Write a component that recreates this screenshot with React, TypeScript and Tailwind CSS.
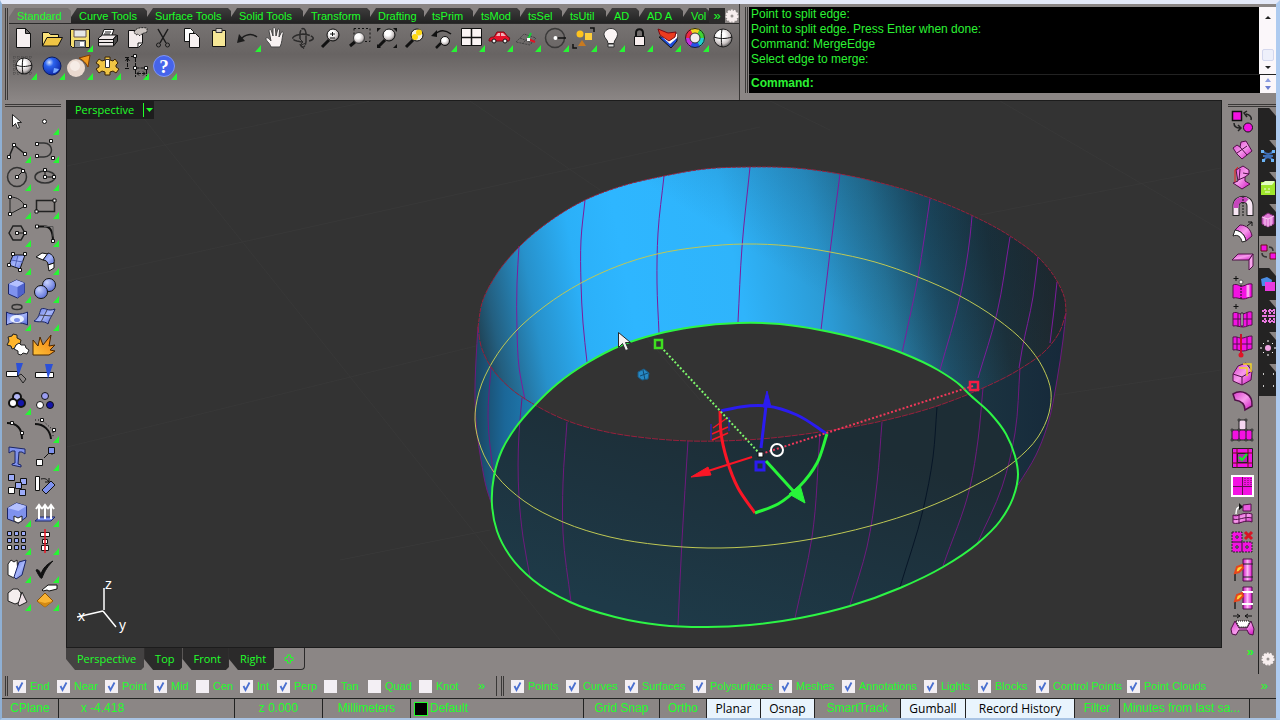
import React, { useState } from "react";

type Point = [number, number];

const dist = (a: Point, b: Point) => Math.hypot(a[0] - b[0], a[1] - b[1]);

// Turns a list of points into a smooth path, tangents weighted by chord length
const curve = (pts: Point[], closed = false) => {
  const n = pts.length;
  const at = (i: number) => (closed ? pts[(i + n) % n] : pts[Math.max(0, Math.min(n - 1, i))]);
  const tangent = (i: number): Point => {
    const [a, b, c] = [at(i - 1), at(i), at(i + 1)];
    const d0 = dist(a, b);
    const d1 = dist(b, c);
    if (!d0) return [(c[0] - b[0]) / d1, (c[1] - b[1]) / d1];
    if (!d1) return [(b[0] - a[0]) / d0, (b[1] - a[1]) / d0];
    const along = (k: 0 | 1) => (((b[k] - a[k]) / d0) * d1 + ((c[k] - b[k]) / d1) * d0) / (d0 + d1);
    return [along(0), along(1)];
  };
  let d = `M${pts[0][0]} ${pts[0][1]}`;
  for (let i = 0; i < (closed ? n : n - 1); i++) {
    const [b, c, tb, tc] = [at(i), at(i + 1), tangent(i), tangent(i + 1)];
    const s = dist(b, c) / 3;
    d += `C${b[0] + tb[0] * s} ${b[1] + tb[1] * s} ${c[0] - tc[0] * s} ${c[1] - tc[1] * s} ${c[0]} ${c[1]}`;
  }
  return d;
};

// Joins a curve onto a path that is already open
const join = (pts: Point[]) => curve(pts).replace("M", "L");

// ---------- Ring geometry ----------
const rimBack: Point[] = [[478, 327], [482, 303], [496, 275], [520, 246], [550, 221], [585, 200], [622, 186], [664, 176], [705, 169], [750, 167], [795, 168], [840, 174], [885, 184], [930, 198], [971, 215], [1010, 236], [1038, 257], [1057, 281], [1065, 300], [1066, 313]];
const rimFrontLeft: Point[] = [[478, 327], [481, 346], [491, 367], [510, 388], [535, 405]];
const rimFrontMid: Point[] = [[535, 405], [568, 421], [607, 432], [647, 438], [690, 441], [720, 441], [760, 439], [820, 432], [882, 421], [937, 406], [969, 394]];
const rimFrontRight: Point[] = [[969, 394], [983, 388], [1020, 369], [1047, 349], [1060, 331], [1066, 313]];
const baseTop: Point[] = [[535, 405], [557, 384], [587, 363], [622, 345], [657, 334], [693, 327], [738, 323], [780, 324], [820, 330], [863, 340], [902, 353], [938, 370], [960, 385], [969, 394]];
const baseRight: Point[] = [[969, 394], [990, 413], [1006, 434], [1015, 456], [1018, 474]];
const baseBottom: Point[] = [[1018, 474], [1013, 498], [1000, 521], [977, 544], [943, 567], [900, 588], [850, 606], [800, 618], [750, 625], [707, 627], [660, 625], [615, 617], [570, 602], [533, 580], [510, 556], [497, 531], [492, 505]];
const baseLeft: Point[] = [[492, 505], [494, 476], [502, 450], [516, 427], [535, 405]];
const sideLeft: Point[] = [[478, 327], [476, 360], [475, 400], [477, 433], [481, 460], [487, 490], [492, 505]];
const sideRight: Point[] = [[1066, 313], [1063, 340], [1057, 380], [1047, 427], [1036, 455], [1018, 485]];
const middle: Point[] = [[745, 244], [790, 246], [830, 252], [875, 262], [918, 277], [960, 296], [997, 319], [1026, 344], [1043, 368], [1051, 392], [1049, 413], [1038, 437], [1015, 461], [970, 488], [923, 509], [870, 526], [812, 539], [760, 546], [708, 548], [660, 545], [610, 537], [563, 522], [524, 501], [496, 475], [481, 448], [475, 420], [479, 392], [493, 361], [515, 332], [545, 306], [581, 283], [618, 266], [657, 254], [700, 247]];

const isoInner: Point[][] = [
  [[519, 246], [517, 283], [517, 330], [519, 367], [525, 400]],
  [[585, 200], [581, 240], [581, 283], [583, 323], [587, 362]],
  [[664, 176], [658, 233], [657, 283], [659, 333]],
  [[750, 167], [742, 247], [738, 322]],
  [[840, 174], [830, 252], [821, 330]],
  [[930, 199], [918, 277], [902, 353]],
  [[972, 216], [970, 237], [960, 297], [940, 370]],
  [[1010, 237], [997, 313], [978, 378]],
  [[1038, 257], [1033, 297], [1022, 350], [1019, 368]],
  [[1057, 282], [1054, 310], [1050, 343]],
];
const isoOuter: Point[][] = [
  [[491, 367], [488, 417], [493, 473]],
  [[522, 398], [519, 433], [519, 497], [523, 537], [530, 577]],
  [[567, 422], [563, 483], [563, 533], [571, 602]],
  [[688, 441], [682, 540], [678, 625]],
  [[820, 433], [812, 537], [795, 618]],
  [[882, 422], [877, 483], [867, 547], [850, 605]],
  [[983, 388], [978, 440], [970, 487], [943, 566]],
  [[1020, 368], [1015, 433], [1002, 487], [977, 544]],
];

const loop = (...parts: Point[][]) => curve(parts[0]) + parts.slice(1).map(join).join("") + "Z";
const back = (pts: Point[]) => [...pts].reverse();

// ---------- Icons, all drawn in a 28x28 cell ----------
const Glass = ({ fill = "url(#ball)" }) => (
  <>
    <path d="M12 16 5 23" stroke="#111" strokeWidth="3" />
    <circle cx="16" cy="11" r="6" fill={fill} stroke="#111" />
  </>
);

const Dot = ({ x, y }: { x: number; y: number }) => (
  <path d={`M${x - 1.5} ${y - 1.5}h3v3h-3z`} fill="#fff" stroke="#111" />
);

const mainIcons: [string, boolean, React.ReactNode][] = [
  ["New", false, <path d="M7.500 4.500h9l5 5v14h-14z M16.500 4.500v5h5" fill="#f6f0f0" stroke="#111" />],
  ["Open", false, <><path d="M5.500 22V8.500h6l2 2h8v4" fill="#fbe27a" stroke="#111" /><path d="M5.500 22 10 13.500h15.500L21 22z" fill="#f0c544" stroke="#111" /></>],
  ["Save", true, <><path d="M5.500 5.500h19v18h-17l-2-2z" fill="#f5de72" stroke="#111" /><path d="M9 6h12v7H9z" fill="#e5e5e5" stroke="#655" /><path d="M9.500 16.500h11v7h-11z" fill="#8c9298" stroke="#333" /><path d="M15 18h4v4h-4z" fill="#fff" /></>],
  ["Print", false, <><path d="M11 5.500h10l-3 8H8z" fill="#fff" stroke="#111" /><path d="m5.500 14 4-3h14l-3 4v7h-15z" fill="#eee8e8" stroke="#111" /><path d="m20.500 22 4-5v-6l-4 4z" fill="#4a4a4a" stroke="#111" /><path d="M6 15.500h14M6 18.500h14M12 8h6M11 10h6" stroke="#111" /></>],
  ["Document properties", false, <><path d="M7.500 6.500h14v13l-4 4h-10z" fill="#f3ecec" stroke="#111" /><path d="M17 23v-4h4" fill="#fff" stroke="#111" /><path d="M13 8c2-4 6-5 13-4v4c-5 2-5 1-7 4l-2-2-2 1z" fill="#c9c2be" stroke="#222" strokeDasharray="2 1" /></>],
  ["Cut", false, <><path d="m9 5 8 14M19 5l-8 14" stroke="#1b1b1b" strokeWidth="1.500" /><circle cx="9.500" cy="21" r="2" fill="none" stroke="#1b1b1b" /><circle cx="18.500" cy="21" r="2" fill="none" stroke="#1b1b1b" /></>],
  ["Copy", false, <><path d="M7.500 4.500h6l3 3v10h-9z" fill="#fff" stroke="#111" /><path d="M12.500 9.500h6l4 4v10h-10z" fill="#f6f0f0" stroke="#111" /></>],
  ["Paste", false, <><path d="M7.500 6.500h13v16h-13z" fill="#f6e796" stroke="#111" /><path d="M11 4.500h6v4h-6z" fill="#d8d0c8" stroke="#333" /></>],
  ["Undo", true, <><path d="M7 16c5-6 12-7 17-3" fill="none" stroke="#1b1b1b" strokeWidth="1.500" /><path d="m4 19 2-9 6 7z" fill="#1b1b1b" /></>],
  ["Pan", false, <path d="M10 23c-1-4-6-7-5-9 2-1 3 1 5 3L8 7c0-2 2-2 2.500 0L12 12l0-7c0-2 2-2 2.500 0l.5 7 1.500-6c.5-2 2.500-1 2 1L18 13l2-4c1-2 3-1 2 1-1 4-1 9-3 13z" fill="#f8f2f2" stroke="#444" />],
  ["Rotate view", false, <g fill="none" stroke="#2c2b2b"><path d="M20 17c8-2 4-6-6-7-10 1-14 5-6 7l5 1M11 15V9c1-6 5-6 6 0v9c-1 6-4 7-6 2" strokeWidth="1.500" strokeDasharray="9 1" /><path d="m11 15 3 3-3 3M17 19l-5 2 3 4" /></g>],
  ["Zoom", false, <><Glass /><path d="M13 10h5M15.500 8v4M13 14h5" stroke="#111" /></>],
  ["Zoom window", false, <><path d="M9 4.500h16v13H9z" fill="none" stroke="#111" strokeDasharray="2 2" /><path d="m11 17-6 5" stroke="#111" strokeWidth="3" /><circle cx="14" cy="14" r="5.500" fill="url(#ball)" stroke="#444" /></>],
  ["Zoom extents", false, <><Glass /><path d="M4 8V4h4L4 8ZM20 4h4v4zM4 20v4h4zM24 20v4h-4z" fill="#111" /></>],
  ["Zoom selected", false, <><Glass fill="#f4efe2" /><circle cx="14" cy="13" r="3" fill="#ffd914" /><circle cx="18" cy="8.500" r="3" fill="#ffd914" /></>],
  ["Undo view", true, <><path d="M5 11c6-6 12-5 17-1" fill="none" stroke="#111" strokeWidth="1.500" /><path d="m2 12 6-6v7z" fill="#111" /><path d="m12 19-5 5" stroke="#111" strokeWidth="2.500" /><circle cx="16" cy="17" r="4.500" fill="url(#ball)" stroke="#111" /></>],
  ["Four viewports", true, <><path d="M4.500 4.500h20v17h-20z" fill="#fbf5f5" stroke="#111" /><path d="M14.500 4v18M4 13.500h21" stroke="#111" strokeWidth="1.500" /></>],
  ["Named views", true, <><path d="M4 17c0-4 3-4 5-4l3-5h7l4 5c2 0 2 1 1 4H4z" fill="#e8122b" stroke="#7c0a14" /><path d="M11 12l2-3h2v3zM16 9h2l3 3h-5z" fill="#f0b0b8" /><circle cx="9" cy="17" r="2" fill="#eee" stroke="#111" /><circle cx="20" cy="17" r="2" fill="#eee" stroke="#111" /></>],
  ["Construction plane", true, <><path d="m3 18 8-8 12 4-6 7zM7 14l12 5M9 20l8-8" fill="none" stroke="#444" strokeDasharray="2 1" /><path d="m15 15 3-6" stroke="#16cf3a" strokeWidth="2" /><path d="m15 15 7 3" stroke="#e01326" strokeWidth="2" /><path d="M14 14h3v3h-3z" fill="#fff" /></>],
  ["Circle center", true, <><circle cx="14" cy="14" r="9.500" fill="none" stroke="#3a3939" strokeWidth="1.500" /><path d="M15 14h10" stroke="#111" strokeWidth="1.500" /><circle cx="14.500" cy="14" r="2" fill="#fff" /></>],
  ["Select", true, <><circle cx="11" cy="10" r="3.500" fill="#ffc31d" /><path d="M16 9h7v7h-7z" fill="#ffcf3b" /><path d="m13 16 4 6H9z" fill="#c97a20" /><path d="M21 4h4v4M4 20v4h4" fill="none" stroke="#111" strokeWidth="1.500" /></>],
  ["Hide", true, <><path d="M14 4.500c4 0 6.500 3 6.500 6 0 4-3.500 5-3.500 9h-6c0-4-4-5-4-9 0-3 3-6 7-6z" fill="#fbf5f5" stroke="#333" /><path d="M11 20h6v3h-6z" fill="#ddd" stroke="#333" /></>],
  ["Lock", true, <><path d="M11 13V9c0-5 7-5 7 0v4" fill="none" stroke="#111" strokeWidth="2" /><path d="M9.500 12.500h10v9h-10z" fill="#f8eeee" stroke="#111" /></>],
  ["Layers", true, <><path d="m6 13 12 11 6-7v-4z" fill="#1c4cd8" stroke="#111" /><path d="m6 10 11 10 7-6v-4z" fill="#fff" /><path d="m5 5 10 4 8-1-1 5-6 4-9-6z" fill="#ec3b1f" stroke="#7c0a14" /></>],
  ["Object properties", true, <>{["#f3d51f", "#3fd334", "#20cfd0", "#2751e8", "#c22ce0", "#ee2541"].map((c, i) => <path key={c} d="M14 14 9 5.340A10 10 0 0 1 19 5.340z" fill={c} transform={`rotate(${i * 60} 14 14)`} />)}<circle cx="14" cy="14" r="9.500" fill="none" stroke="#222" /><circle cx="14" cy="14" r="5" fill="#f3eded" stroke="#333" /></>],
  ["Shade", false, <><circle cx="14" cy="14" r="9" fill="url(#ball)" stroke="#222" /><path d="M13 5c-1 6-1 12 0 18M5 13c5 2 12 2 18 0" fill="none" stroke="#111" /></>],
  ["Wireframe", true, <><path d="M5 4v20M9 4v20M13 4v20M17 4v20M21 4v20M4 5h20M4 9h20M4 13h20M4 17h20M4 21h20" stroke="#4c4a4a" strokeDasharray="1 1" /><circle cx="15" cy="14" r="8" fill="url(#ball)" stroke="#222" /><path d="M14 6c-1 6-1 10 0 16M7 13c5 2 10 2 16 0" fill="none" stroke="#111" /></>],
  ["Render", true, <><circle cx="15" cy="14" r="9" fill="url(#blueBall)" stroke="#0a1c60" /><path d="M16 21c3 0 5-2 6-4l-5-1z" fill="#79a9ff" /></>],
  ["Spotlight", true, <><circle cx="11" cy="16" r="9" fill="#ead9cf" /><circle cx="10" cy="14" r="5" fill="#f6ece6" /><path d="m14 6 11-3-2 12c-2-4-5-7-9-9z" fill="#f09a1d" stroke="#7a3a05" /></>],
  ["Options", true, <><g fill="#f0c544" stroke="#3b2505"><path d="M12 5h5v3l3 1 2-2 3 4-2 2v2l3 2-3 4-3-2-3 1v3h-5v-3l-3-1-3 2-3-4 3-2v-2L3 11l3-4 3 2 3-1z" /></g><path d="M12.500 7.500h4v8h-4z" fill="#fff" stroke="#333" /></>],
  ["Dimension", true, <><g stroke="#111" fill="none"><path d="M6.500 6v10M4 5.500h5M4 16.500h5M14 4.500H9M14.500 6v10h10M14.500 18v7M25.500 18v7M16 21.500h8M6.500 6l-2 3M6.500 6l2 3M16 21.500l2-2M16 21.500l2 2M24 21.500l-2-2M24 21.500l-2 2" strokeDasharray="4 1" /></g><Dot x={14} y={4} /><Dot x={14} y={16} /><Dot x={25} y={16} /></>],
  ["Help", true, <><circle cx="15" cy="14" r="10.500" fill="#4664ea" stroke="#7f95f5" /><text x="15" y="21" textAnchor="middle" fill="#fff" fontSize="19" fontWeight="700" fontFamily="Liberation Serif, serif">?</text></>],
];

const blue = "#7f92ee";
const toolIcons: [string, boolean, React.ReactNode][] = [
  ["Select objects", false, <path d="M9.500 7.500v12l3-3 2 5 2-1-2-5h4z" fill="#fff" stroke="#222" />],
  ["Point", true, <circle cx="13.500" cy="14.500" r="2" fill="#fff" stroke="#111" />],
  ["Polyline", true, <><path d="m6 22 5-12 11 9" fill="none" stroke="#222" strokeWidth="1.500" /><Dot x={6} y={22} /><Dot x={11} y={10} /><Dot x={22} y={19} /></>],
  ["Curve", true, <><path d="M6 8h7c10 0 10 14 0 14H6" fill="none" stroke="#333" strokeWidth="1.500" /><Dot x={6} y={9} /><Dot x={6} y={21} /><Dot x={20} y={6} /><Dot x={22} y={23} /></>],
  ["Circle", true, <><circle cx="14" cy="14" r="9.500" fill="none" stroke="#333" strokeWidth="1.500" /><path d="m14 14 6-6" stroke="#111" /><Dot x={14} y={14} /><Dot x={20} y={8} /></>],
  ["Ellipse", true, <><ellipse cx="14" cy="14" rx="10" ry="6" fill="none" stroke="#333" strokeWidth="1.500" /><path d="M14 7v7h9" fill="none" stroke="#111" /><Dot x={14} y={7} /><Dot x={14} y={14} /><Dot x={23} y={14} /></>],
  ["Arc", true, <><path d="M7 23V6c8 0 12 4 15 9z" fill="none" stroke="#222" /><Dot x={7} y={6} /><Dot x={7} y={23} /><Dot x={22} y={15} /></>],
  ["Rectangle", true, <><path d="M5.500 9.500h18v11h-18z" fill="none" stroke="#222" strokeWidth="1.500" /><Dot x={5.500} y={20.500} /><Dot x={23.500} y={9.500} /></>],
  ["Polygon", true, <><path d="m6 14 4-7h8l4 7-4 7h-8z" fill="none" stroke="#222" strokeWidth="1.500" /><path d="M14 14h8" stroke="#111" /><Dot x={14} y={14} /><Dot x={22} y={14} /></>],
  ["Fillet curves", true, <><path d="M6 7.500h8c6 0 8 5 8 15" fill="none" stroke="#111" strokeWidth="2" /><path d="M13 7.500h9v10" fill="none" stroke="#555" /><Dot x={6} y={7.500} /><Dot x={22} y={22} /></>],
  ["Surface from corners", true, <><path d="m10 8 12 0-5 14-11-4z" fill="url(#blu)" stroke="#111" /><path d="m15 8-3 12M8 13l12 2" stroke="#5262b8" /><Dot x={10} y={7} /><Dot x={22} y={7} /><Dot x={6} y={18} /><Dot x={17} y={23} /></>],
  ["Sweep", true, <><path d="m5 10 6-4 6 1-5 6z" fill="#fff" stroke="#111" /><path d="m12 13 5-7c5 1 7 6 6 10l-6 2c0-3-2-5-5-5z" fill="url(#blu)" stroke="#111" /><path d="m17 18 6-2v5l-5 3z" fill="#fff" stroke="#111" /></>],
  ["Box", true, <><path d="m5.500 9 8-4 8 3v10l-7 5-9-4z" fill={blue} stroke="#1b2566" /><path d="m5.500 9 9 3 7-4-8-3z" fill="#b4c0ff" /><path d="m14.500 12 7-4v10l-7 5z" fill="#4f62cc" /></>],
  ["Union", true, <><circle cx="18" cy="10" r="6.500" fill="url(#bluBall)" stroke="#111" /><circle cx="10" cy="17" r="6.500" fill="url(#bluBall)" stroke="#111" /></>],
  ["Extrude", true, <><ellipse cx="14" cy="4" rx="5" ry="2.500" fill="none" stroke="#333" strokeWidth="1.500" /><path d="M3.500 9c5 3 15 3 21 0v13c-6-3-16-3-21 0z" fill="url(#blu)" stroke="#1b2566" /><ellipse cx="14" cy="16" rx="7" ry="4" fill="#e8eeff" /><ellipse cx="14" cy="17" rx="3" ry="2" fill={blue} /></>],
  ["Surface edit", true, <><path d="M10 6c5-2 6 3 14 0-2 6-5 8-7 15-5-4-8-1-14-3 5-3 5-7 7-12z" fill="url(#blu)" stroke="#1b2566" /><path d="m8 12 13 1M16 7l-6 12" stroke="#445" /></>],
  ["Join", false, <><path d="m5 6 4-1 1-2 4 1v3l4 2-1 4-4 1-1 3-3 1-1-3-4-1 2-4z" fill="#ffb52a" stroke="#222" /><path d="m13 14 3-2 2 2 4 0 1 3 3 2-2 4-4-1-2 2-3-1 0-3-4-2z" fill="#fff" stroke="#222" /></>],
  ["Explode", false, <path d="M2 24V9l5 6 2-9 3 8 8-10-2 11 6-1-5 5 5 1-6 4z" fill="url(#flame)" stroke="#4a2600" />],
  ["Trim", false, <><path d="M3.500 12.500h11v5h-11z" fill="#fff" stroke="#111" /><path d="m13 4 7 0-5 14z" fill="#2b50d8" /><path d="m15 17 3-2 5 5-3 4z" fill="none" stroke="#222" /></>],
  ["Split", false, <><path d="M4.500 13.500h18v5h-18z" fill="#fff" stroke="#111" /><path d="M14 5h8l-5 15z" fill="#2b50d8" /></>],
  ["Group", true, <><circle cx="14" cy="10" r="4" fill="#b2b6f5" stroke="#111" strokeWidth="2" /><circle cx="10" cy="16" r="4" fill="#fff" stroke="#111" strokeWidth="2" /><circle cx="18" cy="16" r="4" fill="#1414a8" stroke="#111" strokeWidth="2" /></>],
  ["Ungroup", false, <><circle cx="14" cy="9" r="3.500" fill="#9a9df0" stroke="#111" /><circle cx="9" cy="18" r="3.500" fill="#fff" stroke="#111" /><circle cx="19" cy="18" r="3.500" fill="#1414a8" stroke="#111" /></>],
  ["Edit points", false, <><path d="M4 8c8 0 15 4 15 16" fill="none" stroke="#111" strokeWidth="2" /><Dot x={9} y={8} /><Dot x={19} y={18} /></>],
  ["Control points", true, <><path d="M4 9c9 0 15 6 16 15" fill="none" stroke="#111" strokeWidth="2" /><path d="M4 5h7l11 10v8" fill="none" stroke="#111" strokeDasharray="1 2" /><Dot x={11} y={5} /><Dot x={23} y={15} /></>],
  ["Text", false, <path d="m6 4 16 2v5l-3-2h-3l-1 12 3 1v2l-9-2v-1l3-1V8H9l-3 2z" fill={blue} stroke="#1b2566" />],
  ["Move", true, <><path d="m13 15 6-6" stroke="#111" /><path d="M17 8h4v4" fill="none" stroke="#111" /><path d="M5.500 16.500h6v6h-6z" fill="#fff" stroke="#111" /><path d="M17.500 4.500h6v6h-6z" fill={blue} stroke="#111" /></>],
  ["Copy objects", false, <>{[[6, 4], [18, 8], [13, 12], [6, 17], [17, 19]].map(([x, y]) => <path key={`${x}-${y}`} d={`M${x - .5} ${y - .5}h6v6h-6z`} fill={x === 6 && y === 17 ? "#fff" : "#9cabf8"} stroke="#111" />)}</>],
  ["Rotate", false, <><path d="M4.500 5.500h4v14h-4z" fill="#fff" stroke="#111" /><path d="M10 8c4-1 6 0 8 3M18 7v4h-4" fill="none" stroke="#111" /><path d="m11 19 9-9 4 4-9 9z" fill={blue} stroke="#111" /></>],
  ["Boolean", true, <><path d="m4.500 9 9-5 10 3v11l-8 6-11-4z" fill={blue} stroke="#1b2566" /><path d="m4.500 9 11 3 8-5-10-3z" fill="#b4c0ff" /><path d="m11 17 4 2 4-2v5l-4 2-4-2z" fill="#fff" stroke="#222" /></>],
  ["Offset normal", true, <><path d="m4 22 5-4h15l-4 4z" fill={blue} stroke="#1b2566" /><path d="M8 20V8M14 20V8M20 20V8M5 10l3-4 3 4M11 10l3-4 3 4M17 10l3-4 3 4" fill="none" stroke="#fff" strokeWidth="2" /></>],
  ["Array", true, <>{[5, 12, 19].map((y) => [5, 12, 19].map((x) => <path key={`${x}-${y}`} d={`M${x - .5} ${y - .5}h4v4h-4z`} fill={x === 5 && y === 19 ? "#fff" : "#9cabf8"} stroke="#111" />))}</>],
  ["Align", true, <><path d="M9.500 5.500h9v4h-9zM11.500 12.500h5v4h-5zM10.500 18.500h7v5h-7z" fill="#fff" stroke="#111" /><path d="M14 2v24" stroke="#ee1525" strokeWidth="1.500" /></>],
  ["Cage edit", true, <><path d="M5 9 8 5l3 2 3-2 1 14-4 4-6-3z" fill="#fff" stroke="#222" /><path d="m16 7 7-2-4 15-6 4-2-2z" fill="url(#blu)" stroke="#1b2566" /></>],
  ["Check", true, <path d="M5 15c2-1 3 0 5 4 2-6 6-10 12-13-5 5-8 9-11 17-1 1-2 0-6-8z" fill="#111" stroke="#111" />],
  ["Solids", true, <><path d="m5 10 5-4h5l3 4-1 9-5 2-7-3z" fill="#f4eeee" stroke="#222" /><path d="m19 9 5 10-8 4-1-2z" fill="#eedfe6" stroke="#222" /></>],
  ["Drag", true, <><path d="m6 18 8-8 8 8-8 6z" fill="#f8b435" stroke="#8a5206" /><path d="m6 18 8 2 8-2-8 6z" fill="#d48a14" /><path d="m11 7 6-5h9v4l-8 2-2-1-4 1z" fill="#fff" stroke="#111" /></>],
];

const m = "#f312e2";
const splineIcons: [string, React.ReactNode][] = [
  ["Convert", <><path d="M4.500 3.500h9v9h-9z" fill={m} stroke="#111" strokeWidth="1.500" /><circle cx="20" cy="19.500" r="4.500" fill={m} stroke="#111" /><path d="M23 12c1-3-1-5-5-6M19 3l-3 2 3 4M6 15c0 3 2 5 6 5M10 23l3-3-3-3" fill="none" stroke="#222" strokeWidth="1.500" /></>],
  ["Append", <><path d="m5 12 4-3 3 2 1-5 5-1 6 10-10 8-5-5z" fill="url(#mag)" stroke="#511048" /><path d="m12 11 7 8M9 17l10-7" stroke="#511048" /></>],
  ["Extrude face", <><path d="m8 6 7-4 6 4v4l-4 3v4l5 3-8 5-9-6 5-2z" fill="url(#mag)" stroke="#511048" /><path d="m10 16 7-3M12 5l-1 11M15 9l6 1" stroke="#511048" /><path d="M10 3 7 6v12" fill="none" stroke="#f21a1a" /></>],
  ["Arch", <><path d="M8 24V14c0-9 14-9 14 0v10" fill="none" stroke="#222" strokeWidth="7" /><path d="M8 23V14c0-9 14-9 14 0v9" fill="none" stroke="#f8e6f4" strokeWidth="5" /><path d="M8 16v-2c0-7 8-8 11-5" fill="none" stroke="#c746bd" strokeWidth="5" /><path d="M15 4v20" stroke="#111" strokeDasharray="2 1" /></>],
  ["Thicken", <><path d="m7 10 5-5c7 0 11 5 12 11l-6 5c-1-6-5-10-11-11z" fill="url(#mag)" stroke="#511048" /><path d="m7 10-2 6c5-2 8 1 9 6l4-1c-1-6-5-10-11-11z" fill="#fff" stroke="#222" /><path d="m19 6 5-4M20 2h4v4" fill="none" stroke="#111" /></>],
  ["Bend", <><path d="m4 12 6-6h15l-4 6z" fill="url(#mag)" stroke="#511048" /><path d="M21 12v10l4-4V6z" fill="#f9a5ee" stroke="#511048" /></>],
  ["Insert edge", <><path d="M5 9c5-2 6 2 10 1s5-3 9-2v13c-4 0-5 2-9 2s-6-2-10-1z" fill={m} stroke="#511048" /><path d="M20 9v12" stroke="#f9a5ee" strokeWidth="3" /><path d="M13 6v17" stroke="#111" strokeDasharray="2 1" /><circle cx="13" cy="6" r="2" fill="#fff" stroke="#555" /><path d="M8 0v5M5.500 2.500h5" stroke="#111" /></>],
  ["Insert two edges", <><path d="M5 9c5-2 6 2 10 1s5-3 9-2v13c-4 0-5 2-9 2s-6-2-10-1z" fill={m} stroke="#511048" /><path d="M10 9v14M19 8v14M5 15h19" stroke="#511048" /><path d="M13 9h2v13h-2z" fill="#fff" stroke="#222" /><path d="M8 0v5M5.500 2.500h5" stroke="#111" /></>],
  ["Weld", <><path d="M5 5c5-1 6 2 10 1s5-2 9-2v13c-4 0-5 2-9 2s-6-2-10-1z" fill={m} stroke="#511048" /><path d="M9 5v13M19 5v13M5 12h19" stroke="#511048" /><path d="M13 2v20" stroke="#c9102c" strokeWidth="2" /><circle cx="13" cy="23" r="2.500" fill="#e01326" /></>],
  ["Crease", <><path d="m5 14 5-8 8-3 6 8-1 9-9 5-9-4z" fill="url(#mag)" stroke="#511048" /><path d="m5 14 9 3 10-6M14 17v8" fill="none" stroke="#511048" /><path d="M11 8h8v8M15 4h8v8" fill="none" stroke="#f2d326" strokeWidth="1.500" /></>],
  ["Smooth", <path d="M5 6c8-5 20-1 19 12l-7 4c0-6-3-9-10-10z" fill="url(#mag)" stroke="#511048" strokeWidth="1.500" />],
  ["Extend", <><path d="M11 4h7v10h-7z" fill="#f5d6f0" stroke="#222" /><path d="M4 14h20v10H4zM11 14v10M18 14v10" fill={m} stroke="#222" />{[[11, 4], [18, 4], [4, 14], [11, 14], [18, 14], [24, 14], [4, 24], [11, 24], [18, 24], [24, 24]].map(([x, y]) => <circle key={`${x}${y}`} cx={x} cy={y} r="1" fill="#fff" stroke="#111" />)}</>],
  ["Fill hole", <><path d="M4.500 4.500h20v19h-20z" fill={m} stroke="#222" /><path d="M4 9h21M4 19h21M9 4v20M20 4v20" stroke="#611" /><path d="M9.500 9.500h10v9h-10z" fill="#b91fb4" stroke="#222" /><path d="m11 13 3 3 5-6" fill="none" stroke="#20dd30" strokeWidth="2.500" /></>],
  ["Subdivide", <><path d="M4 4h21v20H4z" fill={m} stroke="#fff" strokeWidth="2" /><path d="M14.500 5v18M5 14.500h19" stroke="#611050" /><path d="M17 6v7M20 6v7M23 6v7" stroke="#611050" strokeDasharray="1 1" /></>],
  ["Merge", <><path d="M5 15c5 3 9-4 19-1v8c-8-3-12 3-19 1z" fill="url(#mag)" stroke="#511048" /><path d="M5 19c6 2 11-3 19-1M11 14v10M18 13v9" fill="none" stroke="#511048" /><path d="m15 5 8-1v7h-8z" fill="#ec5be0" stroke="#511048" /><path d="M8 14c0-5 1-7 4-7" fill="none" stroke="#fff" strokeWidth="1.500" /><path d="m11 3 4 4-4 3z" fill="#111" /></>],
  ["Delete face", <><path d="M4 4h10v10h10v10H4z" fill={m} stroke="#222" strokeDasharray="2 1" /><path d="M4 14h10v10" fill="none" stroke="#222" /><path d="M8 8h2v2H8zM8 18h2v2H8zM18 18h2v2h-2z" fill="#fff" stroke="#222" /><path d="m17 4 7 7M24 4l-7 7" stroke="#d81424" strokeWidth="3" /></>],
  ["Hot edge", <><path d="M15 3h9v22h-9z" fill="url(#magFlat)" stroke="#511048" /><path d="M15 8h10M15 21h10" stroke="#222" /><path d="M7 25v-7" fill="none" stroke="#222" strokeWidth="1.500" /><path d="m7 17 2-6 5-2 1 3-4 4z" fill="#ffd43a" stroke="#e8451a" strokeWidth="2" /></>],
  ["Hot edge loop", <><path d="M15 3h9v22h-9z" fill="url(#magFlat)" stroke="#511048" /><path d="M14 8h11M14 20h11" stroke="#fff" strokeWidth="2" /><path d="M7 25v-7" fill="none" stroke="#222" strokeWidth="1.500" /><path d="m7 17 2-6 5-2 1 3-4 4z" fill="#ffd43a" stroke="#e8451a" strokeWidth="2" /></>],
  ["Pull", <><path d="M5 4h7M24 4h-7M9 2l3 2-3 2M20 2l-3 2 3 2" fill="none" stroke="#111" /><path d="m7 9 4 7h8l4-7 3 8-1 6-4-1-2-4h-8l-3 5-4-1-1-5z" fill="url(#mag)" stroke="#511048" /><path d="M8 9h14l-3 6h-8z" fill="#fff" stroke="#111" strokeDasharray="1 1" /></>],
];

const sideTabs: [string, React.ReactNode][] = [
  ["Blank", null],
  ["Manipulate", <><path d="M3 3c3 4 8 4 10 0M4 13c1-5 7-5 9 0M3 8h10" fill="none" stroke="#3d6fb8" strokeWidth="2" /><path d="M1 2h3v3H1zM12 2h3v3h-3zM2 11h3v3H2zM11 11h3v3h-3z" fill="#6cb4f5" /></>],
  ["Box mode", <><path d="M1 2h14v13H1z" fill="#9fe62c" /><path d="m1 4 4-3h10l-3 4H1z" fill="#e4ffc0" /><path d="M5 8v2M9 8v2M5 12h5" stroke="#f3ffe0" /></>],
  ["Primitives", <><path d="m2 5 6-4 6 3v8l-6 3-6-3z" fill="#e07ad6" stroke="#7d2a76" /><path d="m2 5 6 2 6-3M8 7v8M5 6v8M11 6v8" fill="none" stroke="#f8c8f2" /></>],
  ["Convert tools", <><path d="M1 1h6v6H1zM10 9h6v6h-6z" fill={m} stroke="#611" /><path d="M9 3c3 0 4 2 4 4M2 9c0 3 2 4 5 4" fill="none" stroke="#333" strokeWidth="1.500" /></>],
  ["Combine", <><path d="m1 3 6-2 5 3-1 6H2z" fill="#4a8de6" /><path d="M5 6h10v9H5z" fill="#e93adf" /></>],
  ["Grid tools", <path d="M2 3h13M2 8h13M2 13h13M5 1v14M10 1v14M14 1v14" stroke="#e979e0" strokeWidth="2" strokeDasharray="2 1" />],
  ["Light", <><circle cx="8" cy="8" r="3" fill="#f2a8e6" /><path d="M8 0v2M8 14v2M0 8h2M14 8h2M3 3l1 1M13 3l-1 1M3 13l1-1M13 13l-1-1" stroke="#fff" /></>],
  ["Frame", <path d="M3 2h1M13 2h1M3 14h1M13 14h1" stroke="#fff" strokeWidth="1.500" />],
];

const Cell = ({ name, more, children }: { name: string; more?: boolean; children: React.ReactNode }) => (
  <button type="button" aria-label={name} title={name} className="size-7 shrink-0">
    <svg viewBox="0 0 28 28" className="block size-7">
      {children}
      {more && <path d="M28 21v7h-6z" fill="#27f534" />}
    </svg>
  </button>
);

const Gear = () => (
  <svg viewBox="0 0 14 14" className="block size-[14px]">
    <circle cx="7" cy="7" r="5.500" fill="#f7eeee" stroke="#f7eeee" strokeWidth="2" strokeDasharray="2 1" />
    <circle cx="7" cy="7" r="1.500" fill="#9a9492" />
  </svg>
);

const toolbarTabs = ["Standard", "Curve Tools", "Surface Tools", "Solid Tools", "Transform", "Drafting", "tsPrim", "tsMod", "tsSel", "tsUtil", "AD", "AD A", "Vol"];

const Toolbar = () => {
  const [active, setActive] = useState("Standard");
  return (
    <section className="flex w-[738px] shrink-0 border-r border-[#3a3837] pt-1">
      <div className="ml-[3px] mr-px w-[3px] border-x border-[#3a3837]" />
      <div className="flex min-w-0 flex-1 flex-col">
        <nav className="flex h-4 items-stretch border-b border-[#2c2b2b]">
          <div className="grid flex-1 grid-cols-[62px_76px_84px_72px_67px_54px_49px_47px_42px_44px_33px_44px_1fr]">
            {toolbarTabs.map((tab) => (
              <button
                key={tab}
                type="button"
                onClick={() => setActive(tab)}
                className={`overflow-hidden whitespace-nowrap pl-2 text-left text-[11px] leading-4 text-[#1dff28] [clip-path:polygon(0_100%,0_60%,6px_0,calc(100%-3px)_0,100%_3px,100%_100%)] ${tab === active ? "bg-[#757170]" : "bg-linear-to-b from-[#3d3c3c] to-[#232323]"}`}
              >
                {tab}
              </button>
            ))}
          </div>
          <button type="button" aria-label="More tabs" className="w-4 bg-[#2c2b2b] text-[13px] leading-3 text-[#1dff28]">»</button>
          <button type="button" aria-label="Toolbar options"><Gear /></button>
        </nav>
        <div className="flex flex-1 flex-wrap content-start bg-linear-to-b from-[#777372] from-0% via-[#686463] via-40% to-[#8b8685]">
          {mainIcons.map(([name, more, art]) => <Cell key={name} name={name} more={more}>{art}</Cell>)}
        </div>
      </div>
    </section>
  );
};

const CommandPanel = () => (
  <section className="flex min-w-0 flex-1 pb-[7px] pl-[5px] pt-[3px]">
    <div className="mr-px w-[3px] border-x border-[#3a3837]" />
    <div className="flex min-w-0 flex-1 flex-col bg-black text-xs text-[#2cf234]">
      <div className="flex flex-1">
        <div role="log" className="flex-1 pl-0.5 leading-[15px]">
          <p>Point to split edge:</p>
          <p>Point to split edge. Press Enter when done:</p>
          <p>Command: MergeEdge</p>
          <p>Select edge to merge:</p>
        </div>
        <div className="flex w-[17px] flex-col items-center justify-between bg-[#fbf7fa] py-1">
          <button type="button" aria-label="Scroll up"><svg viewBox="0 0 6 4" className="mt-1 block h-1 w-1.5"><path d="M0 4 3 1l3 3z" fill="#222" /></svg></button>
          <span className="mt-6 h-3 w-3 rounded-xs border border-[#d4d8ee] bg-[#eef0fb]" />
          <button type="button" aria-label="Scroll down"><svg viewBox="0 0 6 4" className="block h-1 w-1.5"><path d="m0 0 3 3 3-3z" fill="#222" /></svg></button>
        </div>
      </div>
      <div className="flex h-[19px] border-t border-[#222]">
        <label htmlFor="command" className="pl-0.5 font-bold leading-4">Command:</label>
        <input id="command" type="text" className="min-w-0 flex-1 bg-transparent px-1 outline-none" />
        <div className="flex w-4 flex-col items-center justify-evenly bg-[#fbf7fa]">
          <svg viewBox="0 0 6 4" className="h-1 w-1.5"><path d="M0 4 3 0l3 4z" fill="#8c9de0" /></svg>
          <svg viewBox="0 0 6 4" className="h-1 w-1.5"><path d="m0 0 3 4 3-4z" fill="#6c7dd0" /></svg>
        </div>
      </div>
    </div>
  </section>
);

const Scene = () => (
  <svg viewBox="67 101 1154 546" className="absolute inset-0 size-full" fill="none">
    <g stroke="#383838">
      <path d="M67 166 370 101M67 281 760 127M67 447 480 345M340 560 490 530M130 101 560 640M470 101 600 190M640 330 700 400M1000 101 1221 230M980 215 1221 168M1050 396 1221 370M770 101 830 130" />
    </g>

    {/* outer wall seen beside the base curve */}
    <path d={loop(rimFrontLeft, back(baseLeft), back(sideLeft))} fill="url(#wallLeft)" />
    <path d={loop(rimFrontRight, sideRight, back(baseRight))} fill="url(#wallRight)" />
    {/* front wall */}
    <path d={loop(rimFrontMid, baseRight, baseBottom, baseLeft)} fill="url(#wallFront)" />
    {/* inner wall */}
    <path d={loop(rimBack, back(rimFrontRight), back(baseTop), back(rimFrontLeft))} fill="url(#wallInner)" />
    <path d={loop(rimBack, back(rimFrontRight), back(baseTop), back(rimFrontLeft))} fill="url(#wallShade)" />

    <g stroke="#7d1c9c">
      {isoInner.map((pts, i) => <path key={i} d={curve(pts)} />)}
    </g>
    <g stroke="#6f1a7e">
      {isoOuter.map((pts, i) => <path key={i} d={curve(pts)} />)}
      <path d={curve(sideLeft)} />
      <path d={curve(sideRight)} />
    </g>
    <path d={curve([[937, 407], [933, 457], [923, 510], [900, 587]])} stroke="#071627" />
    <path d={curve(middle, true)} stroke="#bfc854" />
    <g stroke="#98203c">
      <path d={curve(rimBack)} strokeDasharray="4 1" />
      <path d={curve([...rimFrontLeft, ...rimFrontMid.slice(1), ...rimFrontRight.slice(1)])} strokeDasharray="6 1" />
    </g>
    <path d={curve([...baseTop, ...baseRight.slice(1), ...baseBottom.slice(1), ...baseLeft.slice(1, -1)], true)} stroke="#2df545" strokeWidth="2" />

    {/* gumball */}
    <g stroke="#2b1cf0" strokeWidth="2">
      <path d="M711 424v16M729 417v14" strokeWidth="1" />
      <path d={curve([[721, 411], [740, 407], [767, 406], [797, 415], [827, 434]])} strokeWidth="3" />
      <path d="m761 448 5-42" strokeWidth="3" />
      <path d="m767 391-4 16h8z" fill="#2b1cf0" strokeWidth="1" />
      <path d="M756 462h8v8h-8z" strokeWidth="3" />
    </g>
    <g stroke="#fa1626">
      <path d="m713 428 14-10M712 434l16-7M712 440l16-7" strokeWidth="1.500" />
      <path d={curve([[720, 411], [721, 433], [727, 460], [738, 488], [755, 513]])} strokeWidth="3" />
      <path d="m752 457-44 14" strokeWidth="2" />
      <path d="m691 477 17-10 3 8z" fill="#fa1626" />
      <path d="m973 386-212 68" stroke="#f2385a" strokeWidth="2" strokeDasharray="2 2" />
      <path d="M970 382h8v8h-8z" stroke="#f51c44" strokeWidth="2.500" />
    </g>
    <g stroke="#28f53a">
      <path d={curve([[755, 513], [778, 504], [799, 487], [817, 463], [827, 434]])} strokeWidth="3" />
      <path d="m766 461 30 33" strokeWidth="3" />
      <path d="m805 503-5-18-11 9z" fill="#28f53a" />
      <path d="m661 347 99 107" stroke="#7df56c" strokeWidth="2" strokeDasharray="2 2" />
      <path d="M655 340h7v8h-7z" stroke="#3fe020" strokeWidth="2.500" />
    </g>
    <path d="M758 452h5v5h-5z" fill="#fff" stroke="#111" />
    <circle cx="777" cy="450" r="6" stroke="#fff" strokeWidth="2" />
    <g>
      <path d="m638 372 6-3 5 4-1 6-6 1-4-3z" fill="#2688c4" stroke="#1a5c86" />
      <path d="m640 376 8-3M643 370l2 10" stroke="#124a70" />
    </g>
    <path d="M618.500 332.500v15l4-4 3 7 3-1-3-7h5z" fill="#f5f2f2" stroke="#2a2a2a" />

    {/* world axes */}
    <path d="M104 588v22M103 611l-26 6M103 611l13 16" stroke="#fff" strokeWidth="1.500" />
    <g fill="#fff" fontSize="14">
      <text x="105" y="589">z</text>
      <text x="78" y="621">x</text>
      <text x="119" y="630">y</text>
    </g>

    <defs>
      <linearGradient id="wallInner" gradientUnits="userSpaceOnUse" x1="466" y1="340" x2="1060" y2="230">
        <stop offset="0" stopColor="#1d2f38" />
        <stop offset=".05" stopColor="#235f80" />
        <stop offset=".12" stopColor="#2791cb" />
        <stop offset=".2" stopColor="#2bb0f8" />
        <stop offset=".28" stopColor="#2eb6ff" />
        <stop offset=".46" stopColor="#2fb4fb" />
        <stop offset=".6" stopColor="#2b9ad4" />
        <stop offset=".7" stopColor="#26789f" />
        <stop offset=".78" stopColor="#1e4f68" />
        <stop offset=".88" stopColor="#1d313b" />
        <stop offset="1" stopColor="#242526" />
      </linearGradient>
      <linearGradient id="wallShade" gradientUnits="userSpaceOnUse" x1="780" y1="270" x2="850" y2="160">
        <stop offset="0" stopColor="#0c2a3c" stopOpacity="0" />
        <stop offset="1" stopColor="#0c2a3c" stopOpacity=".25" />
      </linearGradient>
      <linearGradient id="wallFront" gradientUnits="userSpaceOnUse" x1="760" y1="420" x2="700" y2="630">
        <stop offset="0" stopColor="#1d2d35" />
        <stop offset=".5" stopColor="#1d333f" />
        <stop offset="1" stopColor="#1e3a48" />
      </linearGradient>
      <linearGradient id="wallLeft" x1="0" y1="0" x2="1" y2="0">
        <stop offset="0" stopColor="#1b4560" />
        <stop offset=".5" stopColor="#1b6798" />
        <stop offset="1" stopColor="#1f7cb2" />
      </linearGradient>
      <linearGradient id="wallRight" x1="0" y1="0" x2="1" y2="0">
        <stop offset="0" stopColor="#1b3441" />
        <stop offset="1" stopColor="#16293a" />
      </linearGradient>
    </defs>
  </svg>
);

const viewTabs = ["Perspective", "Top", "Front", "Right"];

const Viewport = () => {
  const [view, setView] = useState("Perspective");
  return (
    <main className="flex min-w-0 flex-1 flex-col">
      <div className="relative flex-1 border border-[#1c1c1c] bg-[#333]">
        <Scene />
        <button type="button" className="relative flex h-[18px] w-[87px] items-center bg-[#1d1d1d] pl-2 font-['Open_Sans',sans-serif] text-[11px] text-[#22ff2a]">
          {view}
          <svg viewBox="0 0 12 16" className="ml-auto h-4 w-3"><path d="M1.500 1v14" stroke="#22ff2a" /><path d="M4 6h7L7.500 10z" fill="#22ff2a" /></svg>
        </button>
      </div>
      <nav className="mb-1 flex h-[22px] font-['Open_Sans',sans-serif] text-[11px] text-[#22ff2a]">
        {viewTabs.map((tab) => (
          <button
            key={tab}
            type="button"
            onClick={() => setView(tab)}
            className={`pl-[11px] pr-2 [clip-path:polygon(0_0,100%_0,100%_calc(100%-3px),calc(100%-3px)_100%,9px_100%,0_50%)] ${tab === view ? "bg-[#444242]" : "bg-[#2b2a2a]"}`}
          >
            {tab}
          </button>
        ))}
        <button type="button" aria-label="New viewport" className="flex w-[31px] items-center justify-center rounded-br-sm border-b border-r border-[#2b2a2a]">
          <svg viewBox="0 0 10 10" className="size-[10px]"><path d="M3.500 1h3v2.500H9v3H6.500V9h-3V6.500H1v-3h2.500z" fill="none" stroke="#22ff2a" /></svg>
        </button>
      </nav>
    </main>
  );
};

const SidePalette = () => (
  <aside className="flex w-[54px] shrink-0 flex-col pl-[6px] pt-1">
    <div className="mb-px h-[3px] border-y border-[#3a3837]" />
    <div className="flex flex-1">
      <div className="flex w-[30px] flex-col">
        {splineIcons.map(([name, art]) => <Cell key={name} name={name}>{art}</Cell>)}
        <button type="button" aria-label="More tools" className="self-end pr-1 text-[13px] font-bold leading-6 text-[#22ff2a]">»</button>
      </div>
      <div className="flex flex-1 flex-col items-center border-l border-[#222]">
        {sideTabs.map(([name, art]) => (
          <button
            key={name}
            type="button"
            aria-label={name}
            className={`flex h-8 w-full items-center justify-center [clip-path:polygon(0_0,60%_0,100%_8px,100%_100%,0_100%)] ${name === "Convert tools" ? "bg-[#8b8685]" : "bg-[#242323]"}`}
          >
            <svg viewBox="0 0 16 16" className="size-4">{art}</svg>
          </button>
        ))}
        <button type="button" aria-label="Palette options" className="mb-2 mt-auto"><Gear /></button>
      </div>
    </div>
  </aside>
);

const osnaps: [string, boolean][] = [["End", true], ["Near", true], ["Point", true], ["Mid", true], ["Cen", false], ["Int", true], ["Perp", true], ["Tan", false], ["Quad", false], ["Knot", false]];
const filters: [string, boolean][] = ["Points", "Curves", "Surfaces", "Polysurfaces", "Meshes", "Annotations", "Lights", "Blocks", "Control Points", "Point Clouds"].map((f) => [f, true]);

const Check = ({ label, on }: { label: string; on: boolean }) => (
  <label className="flex items-center gap-1 whitespace-nowrap">
    <span className="grid size-[13px] shrink-0">
      <input type="checkbox" defaultChecked={on} className="peer col-start-1 row-start-1 size-[13px] appearance-none bg-[#f3eff4]" />
      <svg viewBox="0 0 13 13" className="pointer-events-none invisible col-start-1 row-start-1 size-[13px] peer-checked:visible">
        <path d="m3.500 6 2 4 4-7.500" fill="none" stroke="#4a6fd0" strokeWidth="1.800" />
      </svg>
    </span>
    {label}
  </label>
);

const SnapBar = () => (
  <div className="flex h-6 items-center text-[11px] text-[#22ff2a]">
    <div className="ml-[3px] mr-[5px] h-5 w-[3px] border-x border-[#3a3837]" />
    <div className="grid w-[463px] grid-cols-[44px_48px_49px_42px_44px_37px_47px_44px_51px_1fr]">
      {osnaps.map(([label, on]) => <Check key={label} label={label} on={on} />)}
    </div>
    <button type="button" aria-label="More snaps" className="w-5 pl-0.5 text-left text-[13px] leading-5">»</button>
    <div className="mr-1 h-5 border-l border-[#3a3837]" />
    <div className="mr-[7px] h-5 w-[3px] border-x border-[#3a3837]" />
    <div className="grid flex-1 grid-cols-[55px_59px_68px_86px_63px_82px_54px_58px_91px_1fr]">
      {filters.map(([label, on]) => <Check key={label} label={label} on={on} />)}
    </div>
    <button type="button" aria-label="More filters" className="mr-2 text-[13px] leading-5">»</button>
  </div>
);

const StatusBar = () => {
  const pane = "border-r border-[#222] truncate";
  const on = "bg-[#e9f4fd] font-['Open_Sans',sans-serif] text-black";
  return (
    <footer className="grid h-5 grid-cols-[57px_176px_88px_88px_173px_76px_47px_54px_54px_86px_65px_109px_45px_130px_1fr] border-t border-[#222] text-xs leading-[19px] text-[#22ff2a]">
      <button type="button" className={pane}>CPlane</button>
      <span className={`${pane} pl-[22px]`}>x -4.418</span>
      <span className={`${pane} text-center`}>z 0.000</span>
      <button type="button" className={pane}>Millimeters</button>
      <button type="button" className={`${pane} flex items-center gap-0.5 pl-[3px]`}>
        <span className="size-[14px] border border-[#22ff2a] bg-black" />Default
      </button>
      <button type="button" className={pane}>Grid Snap</button>
      <button type="button" className={pane}>Ortho</button>
      <button type="button" aria-pressed="true" className={`${pane} ${on}`}>Planar</button>
      <button type="button" aria-pressed="true" className={`${pane} ${on}`}>Osnap</button>
      <button type="button" className={pane}>SmartTrack</button>
      <button type="button" aria-pressed="true" className={`${pane} ${on}`}>Gumball</button>
      <button type="button" aria-pressed="true" className={`${pane} ${on}`}>Record History</button>
      <button type="button" className={pane}>Filter</button>
      <span className={`${pane} pl-[3px]`}>Minutes from last sa...</span>
      <span />
    </footer>
  );
};

const SharedDefs = () => (
  <svg className="absolute size-0" aria-hidden="true">
    <defs>
      <radialGradient id="ball" cx=".4" cy=".35" r=".7"><stop offset=".3" stopColor="#fff" /><stop offset=".7" stopColor="#c9c2c2" /><stop offset="1" stopColor="#444" /></radialGradient>
      <radialGradient id="blueBall" cx=".35" cy=".3" r=".8"><stop offset="0" stopColor="#d5e4ff" /><stop offset=".3" stopColor="#2b63ee" /><stop offset="1" stopColor="#0a1f9c" /></radialGradient>
      <radialGradient id="bluBall" cx=".35" cy=".3" r=".8"><stop offset="0" stopColor="#c9d3ff" /><stop offset="1" stopColor="#5468d6" /></radialGradient>
      <linearGradient id="blu" x1="0" y1="0" x2="1" y2="1"><stop offset="0" stopColor="#6177e2" /><stop offset=".5" stopColor="#a8b7fb" /><stop offset="1" stopColor="#5468d6" /></linearGradient>
      <linearGradient id="flame" x1="0" y1="1" x2="1" y2="0"><stop offset="0" stopColor="#ffc53a" /><stop offset="1" stopColor="#ee7a10" /></linearGradient>
      <linearGradient id="mag" x1="0" y1="0" x2="1" y2="1"><stop offset="0" stopColor="#d83acb" /><stop offset=".5" stopColor="#f79bec" /><stop offset="1" stopColor="#d011c2" /></linearGradient>
      <linearGradient id="magFlat" x1="0" y1="0" x2="1" y2="0"><stop offset="0" stopColor="#d011c2" /><stop offset=".5" stopColor="#fbb9f3" /><stop offset="1" stopColor="#e012d2" /></linearGradient>
    </defs>
  </svg>
);

export default function App() {
  return (
    <div className="flex min-h-screen flex-col overflow-hidden border-b-2 border-l-2 border-r-4 border-t-4 border-b-[#a9c4e4] border-l-[#8fb0d4] border-r-[#aecbf0] border-t-[#e4e9f8] bg-[#8b8685] font-['Liberation_Sans',Arial,sans-serif]">
      <SharedDefs />
      <header className="flex h-24">
        <Toolbar />
        <CommandPanel />
      </header>
      <div className="flex flex-1">
        <aside className="w-16 shrink-0 pl-px pt-1">
          <div className="ml-0.5 h-[3px] w-14 border-y border-[#3a3837]" />
          <div className="grid w-14 grid-cols-2">
            {toolIcons.map(([name, more, art]) => <Cell key={name} name={name} more={more}>{art}</Cell>)}
          </div>
        </aside>
        <Viewport />
        <SidePalette />
      </div>
      <SnapBar />
      <StatusBar />
    </div>
  );
}
